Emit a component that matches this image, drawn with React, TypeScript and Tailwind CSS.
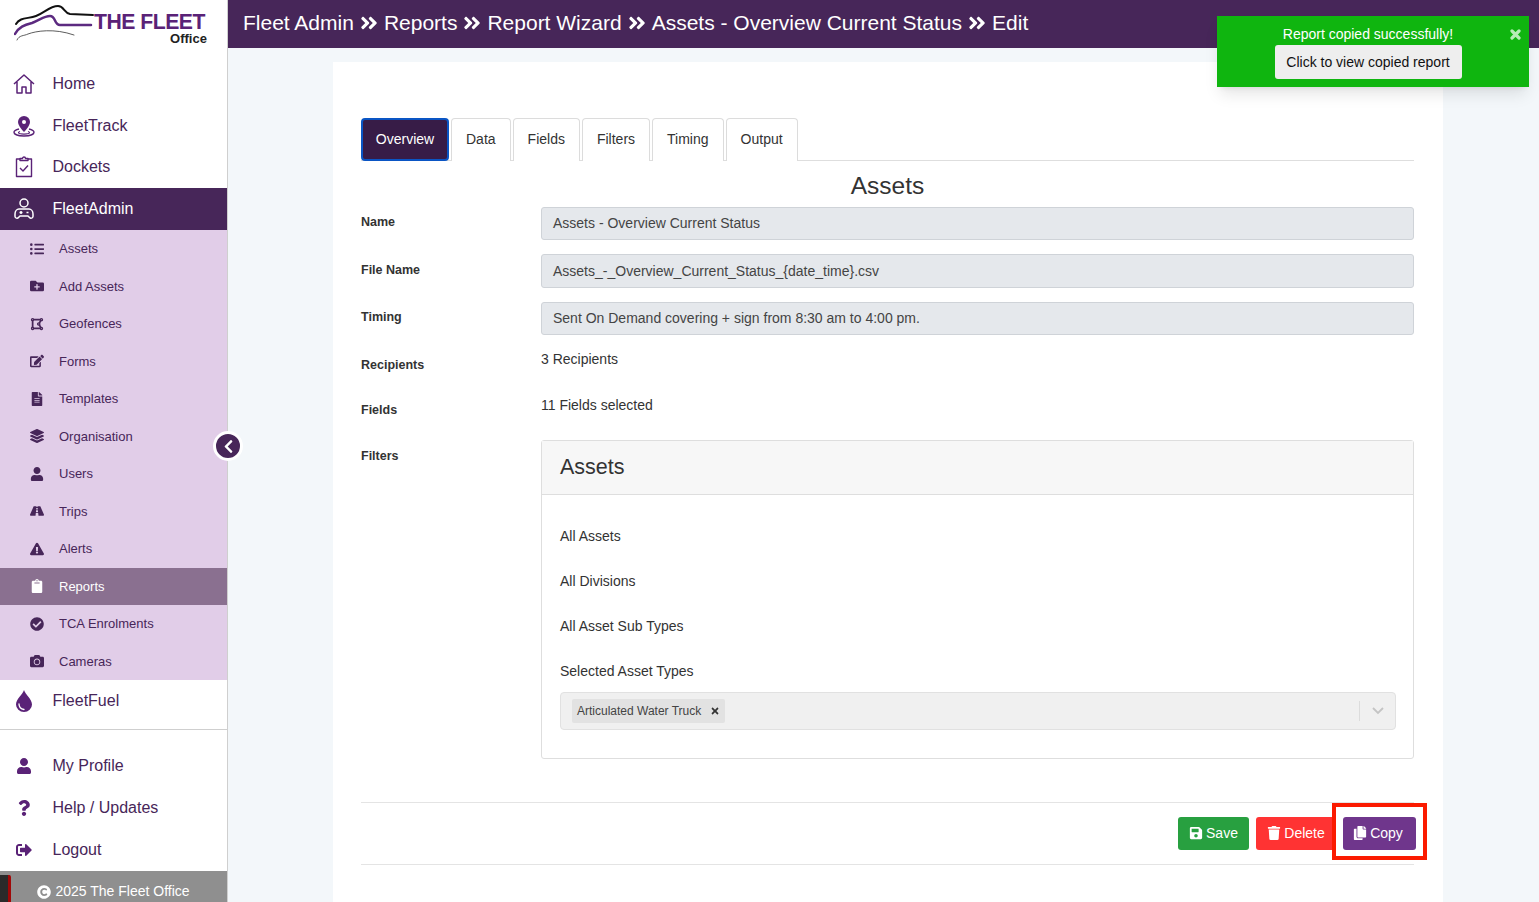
import { FC, ReactNode } from 'react';
import {
  FaAngleDoubleRight,
  FaCamera,
  FaCheckCircle,
  FaChevronLeft,
  FaClipboard,
  FaCopy,
  FaCopyright,
  FaDrawPolygon,
  FaEdit,
  FaExclamationTriangle,
  FaFileAlt,
  FaFolderPlus,
  FaLayerGroup,
  FaListUl,
  FaQuestion,
  FaRoad,
  FaSave,
  FaSignOutAlt,
  FaTimes,
  FaTrash,
  FaUser,
} from 'react-icons/fa';

const IconHome = () => (
  <svg width="22" height="20" viewBox="0 0 22 20" fill="none" stroke="currentColor" strokeWidth="1.5" strokeLinejoin="round">
    <path d="M1 10 11 1l10 9M4 8v11h5v-6h4v6h5V8" />
  </svg>
);

const IconTrack = () => (
  <svg width="22" height="22" viewBox="0 0 22 22" fill="none">
    <path d="M11 1a6 6 0 0 0-6 6c0 4 6 10 6 10s6-6 6-10a6 6 0 0 0-6-6z" fill="currentColor" />
    <circle cx="11" cy="7" r="2" fill="#fff" />
    <path d="M6 14c-3 .7-5 1.800-5 3.300C1 19.500 5.500 21 11 21s10-1.500 10-3.700c0-1.500-2-2.600-5-3.300" stroke="currentColor" strokeWidth="1.400" />
    <path d="M7 16.500c-1 .3-1.500.7-1.500 1.100 0 .9 2.500 1.500 5.500 1.500s5.500-.6 5.500-1.500c0-.4-.5-.8-1.500-1.100" stroke="currentColor" strokeWidth="1.200" />
  </svg>
);

const IconDockets = () => (
  <svg width="18" height="22" viewBox="0 0 18 22" fill="none" stroke="currentColor" strokeWidth="1.400" strokeLinejoin="round">
    <path d="M5 3H1.500v17.500h15V3H13" />
    <path d="M5 4.500V2.500h2.500a1.500 1.500 0 0 1 3 0H13v2z" />
    <path d="m5 12 3 3 5-5.500" />
  </svg>
);

const IconAdmin = () => (
  <svg width="20" height="22" viewBox="0 0 20 22" fill="none" stroke="currentColor" strokeWidth="1.500" strokeLinejoin="round">
    <circle cx="10" cy="5" r="4" />
    <path d="M5 11h10c2 0 4 2 4 5v2.500a2 2 0 0 1-3.500 1L14 18H6l-1.500 1.500A2 2 0 0 1 1 18.500V16c0-3 2-5 4-5z" />
    <path d="M5.500 14.500h3M7 13v3M12.500 14.500h2" />
  </svg>
);

const IconFuel = () => (
  <svg width="16" height="22" viewBox="0 0 16 22">
    <path d="M8 0c1 4 8 9 8 14.500A8 7.500 0 0 1 0 14.500C0 9 7 4 8 0z" fill="currentColor" />
    <path d="M3 14c0 3 2 5 5 5.500" fill="none" stroke="#fff" strokeWidth="1.300" strokeLinecap="round" />
  </svg>
);

const LogoMark = () => (
  <svg width="80" height="36" viewBox="0 0 80 36" fill="none" strokeLinecap="round">
    <path d="M2 19C6 12 14 14 22 11 30 8 36 1 44 1 50 1 50 8 56 9L79 10" stroke="#111" strokeWidth="2" />
    <path d="M1 29C5 22 10 20 18 18 26 15 30 11 36 11 42 11 40 20 46 20L77 20" stroke="#5c2a80" strokeWidth="2.500" />
    <path d="M3 35C5 30 10 31 14 29 22 26 40 23 60 30" stroke="#333" strokeWidth="0.800" />
  </svg>
);

const MainItem: FC<{ icon: ReactNode; label: string; active?: boolean }> = ({ icon, label, active }) => (
  <div className={`flex items-center h-[42px] text-[16px] ${active ? 'bg-[#472659] text-white' : 'text-[#472659]'}`}>
    <span className={`w-[52.500px] flex justify-center pr-[4px] ${active ? 'text-white' : 'text-[#5a2277]'}`}>{icon}</span>
    {label}
  </div>
);

const SubItem: FC<{ icon: ReactNode; label: string; active?: boolean }> = ({ icon, label, active }) => (
  <div className={`flex items-center h-[37.5px] text-[13px] ${active ? 'bg-[#8a7090] text-white' : 'text-[#472659]'}`}>
    <span className="w-[59px] flex justify-center pl-[15px] text-[14px]">{icon}</span>
    {label}
  </div>
);

const subItems = [
  { icon: <FaListUl />, label: 'Assets' },
  { icon: <FaFolderPlus />, label: 'Add Assets' },
  { icon: <FaDrawPolygon />, label: 'Geofences' },
  { icon: <FaEdit />, label: 'Forms' },
  { icon: <FaFileAlt />, label: 'Templates' },
  { icon: <FaLayerGroup />, label: 'Organisation' },
  { icon: <FaUser />, label: 'Users' },
  { icon: <FaRoad />, label: 'Trips' },
  { icon: <FaExclamationTriangle />, label: 'Alerts' },
  { icon: <FaClipboard />, label: 'Reports', active: true },
  { icon: <FaCheckCircle />, label: 'TCA Enrolments' },
  { icon: <FaCamera />, label: 'Cameras' },
];

const Sidebar = () => (
  <aside className="relative w-[228px] shrink-0 h-full flex flex-col bg-white border-r border-[#cfcfcf]">
    <div className="h-[63px] pl-[14px] pt-[5px] flex items-start">
      <LogoMark />
      <div className="mt-[8px] flex flex-col items-end">
        <span className="text-[21.200px] font-bold tracking-[-0.5px] text-[#5a2277] leading-[18px]">THE FLEET</span>
        <span className="text-[13px] font-bold text-[#222] mr-[-2px] leading-[14px] mt-[1px]">Office</span>
      </div>
    </div>
    <MainItem icon={<IconHome />} label="Home" />
    <MainItem icon={<IconTrack />} label="FleetTrack" />
    <MainItem icon={<IconDockets />} label="Dockets" />
    <MainItem icon={<IconAdmin />} label="FleetAdmin" active />
    <div className="bg-[#e1cde8]">
      {subItems.map((item) => (
        <SubItem key={item.label} {...item} />
      ))}
    </div>
    <MainItem icon={<IconFuel />} label="FleetFuel" />
    <div className="mt-[7px] border-t border-[#cfcfcf] pt-[15px]">
      <MainItem icon={<FaUser className="text-[16px]" />} label="My Profile" />
      <MainItem icon={<FaQuestion className="text-[16px]" />} label="Help / Updates" />
      <MainItem icon={<FaSignOutAlt className="text-[16px]" />} label="Logout" />
    </div>
    <div className="flex-1 flex bg-[#8f8f8f] text-white text-[14px]">
      <div className="w-[11px] mt-[4px] bg-[#2a2a2a] border-r-[3px] border-[#a00808] rounded-tr-[2px]" />
      <div className="flex-1 flex items-center justify-center gap-[4px] pr-[11px] pt-[10px]">
        <FaCopyright />
        2025 The Fleet Office
      </div>
    </div>
    <button className="absolute left-[213px] top-[431px] w-[30px] h-[30px] rounded-full bg-[#472659] border-[3px] border-white flex items-center justify-center text-white text-[15px]">
      <FaChevronLeft />
    </button>
  </aside>
);

const crumbs = ['Fleet Admin', 'Reports', 'Report Wizard', 'Assets - Overview Current Status', 'Edit'];

const Header = () => (
  <header className="h-[48px] shrink-0 bg-[#472659] text-white flex items-center pl-[15px] pb-[2px] text-[21px] gap-[5px]">
    {crumbs.map((c, i) => (
      <span key={c} className="flex items-center gap-[5px]">
        {i > 0 && <FaAngleDoubleRight className="text-[20px]" />}
        {c}
      </span>
    ))}
  </header>
);

const Tab: FC<{ label: string; active?: boolean }> = ({ label, active }) => (
  <div
    className={`h-[43px] flex items-center justify-center rounded-t-[4px] text-[14px] ${
      active
        ? 'w-[88px] bg-[#371c47] text-white border-2 border-[#0a55c4] rounded-b-[4px] mb-[-1px]'
        : 'bg-white text-[#333] border border-[#dcdcdc] border-b-0 px-[14px] pb-[2px]'
    }`}
  >
    {label}
  </div>
);

const Row: FC<{ label: string; labelPt: string; className: string; children: ReactNode }> = ({ label, labelPt, className, children }) => (
  <div className={`flex ${className}`}>
    <div className={`w-[180px] shrink-0 text-[12.500px] font-bold text-[#333] ${labelPt}`}>{label}</div>
    <div className="flex-1">{children}</div>
  </div>
);

const ReadOnly: FC<{ value: string; tall?: boolean }> = ({ value, tall }) => (
  <div className={`${tall ? 'h-[34px]' : 'h-[33px]'} flex items-center px-[11px] bg-[#e5e8ec] border border-[#cfd3d8] rounded-[3px] text-[14px] text-[#444]`}>
    {value}
  </div>
);

const FilterCard = () => (
  <div className="border border-[#dedede] rounded-[3px] h-[319px] text-[14px] text-[#333]">
    <div className="h-[54px] flex items-center px-[18px] bg-[#f7f7f7] border-b border-[#dedede] text-[21.500px]">Assets</div>
    <div className="px-[18px] pt-[33px] flex flex-col gap-[28px] leading-[17px]">
      <div>All Assets</div>
      <div>All Divisions</div>
      <div>All Asset Sub Types</div>
      <div>Selected Asset Types</div>
    </div>
    <div className="ml-[18px] mr-[17px] mt-[12px] h-[38px] flex items-center justify-between bg-[#f0f0f0] border border-[#e1e1e1] rounded-[4px] pl-[11px]">
      <div className="h-[24px] flex items-center gap-[9px] px-[5px] pb-[1px] bg-[#e2e2e2] rounded-[2px] text-[12px] text-[#444]">
        Articulated Water Truck
        <FaTimes className="text-[10px] text-[#333]" />
      </div>
      <div className="flex items-center h-[20px] border-l border-[#dcdcdc] w-[36px] justify-center">
        <svg width="12" height="8" viewBox="0 0 12 8" fill="none" stroke="#c4c4c4" strokeWidth="1.800">
          <path d="m1 1 5 5 5-5" />
        </svg>
      </div>
    </div>
  </div>
);

const ActionButton: FC<{ icon: ReactNode; label: string; className: string }> = ({ icon, label, className }) => (
  <button className={`h-[33px] flex items-center justify-center gap-[3px] rounded-[3px] text-white text-[14px] ${className}`}>
    {icon}
    {label}
  </button>
);

const Toast = () => (
  <div className="absolute left-[1217px] top-[16px] w-[312px] h-[71px] bg-[#0fb50f] text-white shadow-lg flex flex-col items-center pt-[10px] pr-[10px]">
    <div className="text-[14px] leading-[17px] mb-[2px]">Report copied successfully!</div>
    <button className="w-[187px] h-[34px] bg-[#eeeeee] rounded-[3px] text-[14px] text-[#111]">Click to view copied report</button>
    <svg className="absolute right-[8px] top-[13px]" width="11" height="11" viewBox="0 0 11 11" fill="none" stroke="#b8ecb8" strokeWidth="3.200" strokeLinecap="round">
      <path d="m2 2 7 7M9 2l-7 7" />
    </svg>
  </div>
);

export default function App() {
  return (
    <div className="relative h-screen w-full overflow-hidden flex bg-[#f3f7fa] font-['Liberation_Sans',Arial,sans-serif]">
      <Sidebar />
      <div className="flex-1 min-w-0 flex flex-col">
        <Header />
        <div className="flex-1 pt-[14px] pl-[105px] pr-[96px]">
          <div className="h-full bg-white pl-[28px] pr-[29px] pt-[56px]">
            <div className="flex gap-[2px] border-b border-[#dedede] h-[43px]">
              <Tab label="Overview" active />
              <Tab label="Data" />
              <Tab label="Fields" />
              <Tab label="Filters" />
              <Tab label="Timing" />
              <Tab label="Output" />
            </div>
            <h1 className="text-center text-[24.500px] leading-[28px] text-[#333] mt-[11px] mb-[7px]">Assets</h1>
            <Row label="Name" labelPt="pt-[6px]" className="mb-[14px]">
              <ReadOnly value="Assets - Overview Current Status" />
            </Row>
            <Row label="File Name" labelPt="pt-[7px]" className="mb-[14px]">
              <ReadOnly value="Assets_-_Overview_Current_Status_{date_time}.csv" tall />
            </Row>
            <Row label="Timing" labelPt="pt-[6px]" className="mb-[14px]">
              <ReadOnly value="Sent On Demand covering + sign from 8:30 am to 4:00 pm." />
            </Row>
            <Row label="Recipients" labelPt="pt-[7px]" className="h-[46px] text-[14px] text-[#333]">
              3 Recipients
            </Row>
            <Row label="Fields" labelPt="pt-[6px]" className="h-[45px] text-[14px] text-[#333]">
              11 Fields selected
            </Row>
            <Row label="Filters" labelPt="pt-[7px]" className="">
              <FilterCard />
            </Row>
            <div className="mt-[43px] h-[63px] border-y border-[#e4e4e4] flex items-center justify-end gap-[7px] pb-[1px]">
              <ActionButton icon={<FaSave />} label="Save" className="w-[71px] bg-[#28a040]" />
              <ActionButton icon={<FaTrash />} label="Delete" className="w-[80px] bg-[#ff3333]" />
              <ActionButton icon={<FaCopy />} label="Copy" className="w-[73px] mr-[-2px] pr-[3px] bg-[#6f368c]" />
            </div>
          </div>
        </div>
      </div>
      <div className="absolute left-[1332px] top-[803px] w-[95px] h-[57px] border-[4px] border-[#fb1a00]" />
      <Toast />
    </div>
  );
}
